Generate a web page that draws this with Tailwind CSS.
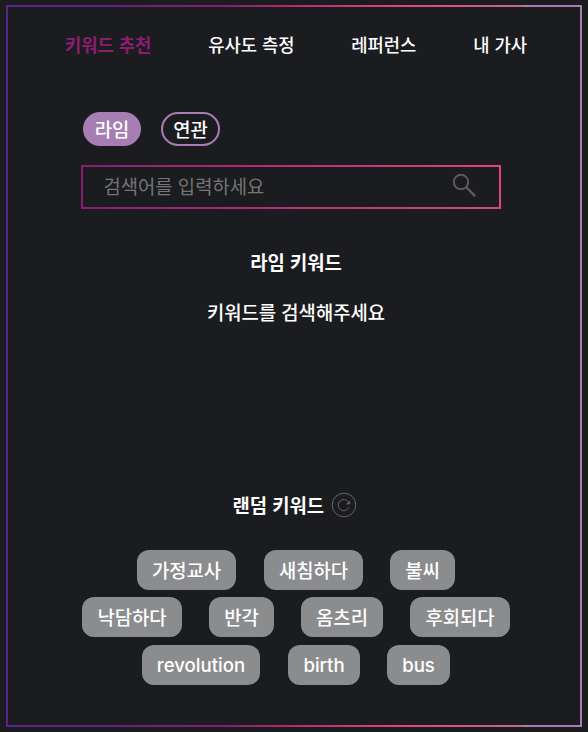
<!DOCTYPE html>
<html lang="ko">
<head>
<meta charset="utf-8">
<title>키워드 추천</title>
<script src="https://cdn.jsdelivr.net/npm/@tailwindcss/browser@4"></script>
</head>
<body class="h-[732px] w-[588px] overflow-hidden bg-[#1b1c1f] pt-[5px] pl-[6px] font-['Noto_Sans_CJK_KR',sans-serif] text-white">
<div class="h-[722px] w-[576px] bg-[linear-gradient(90deg,#5a2488_0%,#5f2486_14%,#8c1c70_38%,#b0306f_50%,#e0457b_68%,#c06c84_90%,#a67eb3_90%,#a67eb3_100%)] p-[2px]">
  <main class="flex h-full flex-col bg-[#1b1c1f]">
    <nav class="ml-[57px] mt-[25px] flex h-6 w-[462px] justify-between text-[17.7px] leading-6 font-medium whitespace-nowrap">
      <a class="font-bold text-[#8c1c70]">키워드 추천</a><a>유사도 측정</a><a>레퍼런스</a><a>내 가사</a>
    </nav>
    <div class="mt-[56px] ml-[75px] flex gap-5 text-[18.8px] leading-[30px] font-medium">
      <button class="h-[34px] w-[58px] rounded-full border-2 border-[#a67eb3] bg-[#a67eb3]">라임</button>
      <button class="h-[34px] w-[59px] rounded-full border-2 border-[#a67eb3]">연관</button>
    </div>
    <div class="mt-[19px] ml-[73px] h-11 w-[420px] bg-linear-to-r from-[#8c1c70] to-[#e0457b] p-[2px]">
      <div class="flex h-full items-center justify-between bg-[#1b1c1f] pr-[22px] pl-[20.5px]">
        <span class="-mt-[2px] text-[18.8px] leading-6 text-[#757575]">검색어를 입력하세요</span>
        <svg class="-mt-1 h-6 w-6" viewBox="0 0 24 24" fill="none" stroke="#5d5a5b" stroke-width="2"><circle cx="8" cy="9" r="7.2"/><path stroke-width="2.4" d="M13.2 14.2l9 9"/></svg>
      </div>
    </div>
    <h2 class="mt-[41px] pl-4 text-center text-[18.8px] leading-6 font-bold"><span class="mr-[12px]">라임 키워드</span></h2>
    <p class="mt-[26px] mr-[-4px] text-center text-[18.8px] leading-6 font-medium">키워드를 검색해주세요</p>
    <div class="mt-[167px] ml-[224.5px] flex h-7 items-center gap-[6.5px]">
      <h2 class="text-[18.8px] leading-6 font-bold whitespace-nowrap">랜덤 키워드</h2>
      <svg class="h-[26px] w-[26px]" viewBox="0 0 26 26" fill="none" stroke="#666467"><circle cx="13" cy="13" r="11.8"/><path d="M17.9 15.4a5.6 5.6 0 1 1-.3-5.2"/><path d="M18.8 9v3h-3.2z" fill="#666467" stroke-width=".6"/></svg>
    </div>
    <div class="mt-[31px] flex flex-col text-center text-[18.8px] leading-10 font-medium whitespace-nowrap">
      <div class="ml-[129px] flex">
        <span class="h-10 w-[99px] rounded-xl bg-[#8b8c8e]">가정교사</span>
        <span class="ml-7 h-10 w-[99px] rounded-xl bg-[#8b8c8e]">새침하다</span>
        <span class="ml-[27px] h-10 w-[65px] rounded-xl bg-[#8b8c8e]">불씨</span>
      </div>
      <div class="mt-[7px] ml-[74px] flex">
        <span class="h-10 w-[100px] rounded-xl bg-[#8b8c8e]">낙담하다</span>
        <span class="ml-[27px] h-10 w-[65px] rounded-xl bg-[#8b8c8e]">반각</span>
        <span class="ml-[27px] h-10 w-[82px] rounded-xl bg-[#8b8c8e]">옴츠리</span>
        <span class="ml-[27px] h-10 w-[100px] rounded-xl bg-[#8b8c8e]">후회되다</span>
      </div>
      <div class="mt-2 ml-[134px] flex font-['Inter',sans-serif] text-[18.6px]">
        <span class="h-10 w-[118px] rounded-xl bg-[#8b8c8e]">revolution</span>
        <span class="ml-7 h-10 w-[72px] rounded-xl bg-[#8b8c8e]">birth</span>
        <span class="ml-[27px] h-10 w-[63px] rounded-xl bg-[#8b8c8e]">bus</span>
      </div>
    </div>
  </main>
</div>
</body>
</html>
